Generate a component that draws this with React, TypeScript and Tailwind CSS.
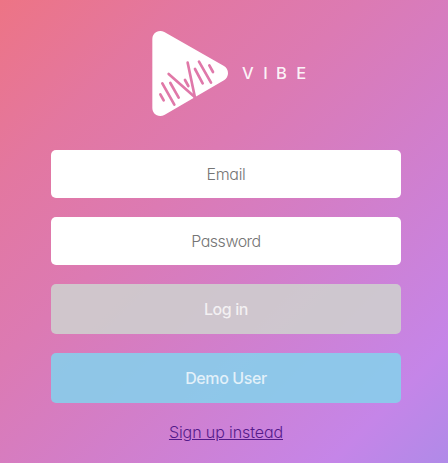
import React from "react";

const bars = [
  "M61 223L71 241",
  "M67 190L103 254",
  "M91 189L116 233",
  "M86 162L165 232",
  "M135 180L145 198",
  "M143 128L166 238",
  "M165 147L188 190",
  "M177 125L213 188",
  "M208 136L219 156",
];

function Logo() {
  return (
    <svg
      width="164"
      height="94"
      viewBox="148 26 164 94"
      fill="#fff"
      className="ml-[148px] block"
      role="img"
      aria-label="Vibe"
    >
      <mask id="wave" maskUnits="userSpaceOnUse" x="0" y="0" width="300" height="315">
        <rect width="300" height="315" fill="#fff" />
        <g stroke="#000" strokeWidth="8" strokeLinecap="round" fill="none">
          {bars.map((d) => (
            <path key={d} d={d} />
          ))}
        </g>
      </mask>
      <g transform="translate(140 20) scale(.33333)">
        <path
          mask="url(#wave)"
          d="M37 57A24 24 0 0 1 73 36.2L252 138.3A24.5 24.5 0 0 1 252 180.5L73 284.8A24 24 0 0 1 37 264Z"
        />
      </g>
      <text
        x="242 263.3 276 296.2"
        y="79.2"
        fontSize="16.5"
        fontWeight="500"
        fillOpacity=".92"
        className="font-['Inter',sans-serif]"
      >
        VIBE
      </text>
    </svg>
  );
}

const field =
  "h-12 w-full rounded-[5px] bg-white text-center text-base font-light placeholder:text-[#757575] outline-none";
const button = "h-[50px] w-full rounded-[5px] text-center text-base font-medium text-white/75";

export default function App() {
  return (
    <main className="h-[463px] w-[448px] overflow-hidden bg-[linear-gradient(135deg,#ed7485_0%,#e377a0_20%,#dc7ab3_40%,#d47dc5_56%,#c585e8_87%,#b08ae8_100%)] pt-[26px] font-['Inter',sans-serif] [font-feature-settings:'cv11']">
      <Logo />
      <form className="mt-[30px] ml-[51px] flex w-[350px] flex-col items-center gap-[19px]">
        <input type="email" placeholder="Email" className={`${field} tracking-[-0.3px]`} />
        <input type="password" placeholder="Password" className={`${field} tracking-[-0.5px]`} />
        <button type="button" className={`${button} bg-[#cecece]/90 tracking-[-0.4px]`}>
          Log in
        </button>
        <button type="button" className={`${button} bg-[#87ceeb]/90 tracking-[-0.4px]`}>
          Demo User
        </button>
        <a href="#" className="text-base leading-5 font-light tracking-[-0.1px] text-[#551a8b] underline">
          Sign up instead
        </a>
      </form>
    </main>
  );
}
